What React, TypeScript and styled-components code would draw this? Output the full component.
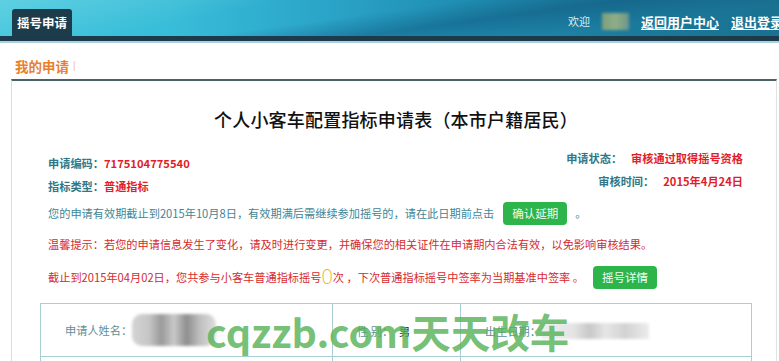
import styled, { createGlobalStyle } from 'styled-components';

const GlobalStyle = createGlobalStyle`
  body {
    margin: 0;
    background: #fff;
    font-family: 'Noto Sans CJK SC', 'Noto Sans', sans-serif;
    overflow: hidden;
  }
`;

export default function App() {
  return (
    <Page>
      <GlobalStyle />
      <Header>
        <Band>
          <Tab>摇号申请</Tab>
          <UserBox>
            <Welcome>欢迎</Welcome>
            <Blurred $w={27} $h={17} $tone="green" />
            <TopLink>返回用户中心</TopLink>
            <TopLink>退出登录</TopLink>
          </UserBox>
        </Band>
        <DarkBar />
        <LightBar />
      </Header>

      <SectionTitle>
        我的申请<Pipe>|</Pipe>
      </SectionTitle>

      <Panel>
        <FormTitle>个人小客车配置指标申请表（本市户籍居民）</FormTitle>

        <InfoRow>
          <InfoLeft>
            <Line>
              <Label>申请编码：</Label>
              <Value>7175104775540</Value>
            </Line>
            <Line>
              <Label>指标类型：</Label>
              <Value>普通指标</Value>
            </Line>
          </InfoLeft>
          <InfoRight>
            <Line>
              <Label>申请状态：</Label>
              <Value $gap>审核通过取得摇号资格</Value>
            </Line>
            <Line>
              <Label>审核时间：</Label>
              <Value $gap>2015年4月24日</Value>
            </Line>
          </InfoRight>
        </InfoRow>

        <Notice $tone="teal" $top={3}>
          您的申请有效期截止到2015年10月8日，有效期满后需继续参加摇号的，请在此日期前点击
          <GreenButton>确认延期</GreenButton>
          <Dot>。</Dot>
        </Notice>

        <Notice $tone="red" $top={9} $h={20}>
          温馨提示：若您的申请信息发生了变化，请及时进行变更，并确保您的相关证件在申请期内合法有效，以免影响审核结果。
        </Notice>

        <Notice $tone="red" $top={11}>
          截止到2015年04月02日，您共参与小客车普通指标摇号<BigCount>0</BigCount>次 ，下次普通指标摇号中签率为当期基准中签率 。
          <GreenButton>摇号详情</GreenButton>
        </Notice>

        <Table>
          <colgroup>
            <col style={{ width: 292 }} />
            <col style={{ width: 128 }} />
            <col />
          </colgroup>
          <tbody>
            <Row>
              <Cell>
                <CellLabel>申请人姓名：</CellLabel>
                <Blurred $w={84} $h={32} $tone="gray" />
              </Cell>
              <Cell>
                <CellLabel>性 别：</CellLabel>
                <CellValue>男</CellValue>
              </Cell>
              <Cell>
                <CellLabel>出生日期：</CellLabel>
                <Blurred $w={108} $h={16} $tone="light" />
              </Cell>
            </Row>
            <Row>
              <Cell />
              <Cell />
              <Cell />
            </Row>
          </tbody>
        </Table>
      </Panel>

      <Watermark>cqzzb.com天天改车</Watermark>
    </Page>
  );
}

const Page = styled.div`
  position: relative;
  width: 779px;
  height: 361px;
  overflow: hidden;
`;

const Header = styled.header`
  display: flex;
  flex-direction: column;
`;

const Band = styled.div`
  height: 36px;
  display: flex;
  align-items: flex-end;
  justify-content: space-between;
  padding-left: 12px;
  background:
    linear-gradient(168deg, rgba(255, 255, 255, 0.18) 0%, transparent 30%),
    linear-gradient(172deg, transparent 45%, rgba(15, 80, 120, 0.45) 60%, transparent 78%),
    linear-gradient(90deg, #3cc5dc 0%, #38bdd8 22%, #2aa4c8 42%, #1f8db1 60%, #1b7b9c 80%, #1a7191 100%);
`;

const Tab = styled.div`
  width: 60px;
  height: 27px;
  display: flex;
  align-items: center;
  justify-content: center;
  background: #1d3c4b;
  border-radius: 3px 3px 0 0;
  color: #fff;
  font-size: 12.5px;
  font-weight: 700;
`;

const UserBox = styled.div`
  align-self: center;
  display: flex;
  align-items: center;
  gap: 12px;
  margin-right: -4px;
  margin-top: 6px;
`;

const Welcome = styled.span`
  color: #d6eef4;
  font-size: 11px;
`;

const TopLink = styled.a`
  color: #fff;
  font-size: 13px;
  font-weight: 700;
  text-decoration: underline;
  text-underline-offset: 2px;
  white-space: nowrap;
  cursor: pointer;
`;

const DarkBar = styled.div`
  height: 5px;
  background: #1c3a49;
`;

const LightBar = styled.div`
  height: 2px;
  background: #a9d2de;
`;

const SectionTitle = styled.div`
  padding: 10px 0 0 15px;
  height: 25px;
  display: flex;
  align-items: center;
  color: #e8802c;
  font-size: 13.5px;
  font-weight: 700;
`;

const Pipe = styled.span`
  margin-left: 4px;
  font-size: 9px;
  font-weight: 400;
  color: #f0a060;
`;

const Panel = styled.section`
  margin: 1px 2px 0 11px;
  border-top: 2px solid #4b6367;
  border-left: 1px solid #dcdcdc;
  border-right: 1px solid #e2e2e2;
  padding: 26px 24px 0 28px;
`;

const FormTitle = styled.h1`
  margin: 0;
  text-align: center;
  font-size: 18px;
  line-height: 24px;
  font-weight: 500;
  color: #111;
  letter-spacing: 0.2px;
`;

const InfoRow = styled.div`
  display: flex;
  justify-content: space-between;
  padding: 0 9px 0 8px;
`;

const InfoLeft = styled.div`
  padding-top: 20px;
  display: flex;
  flex-direction: column;
`;

const InfoRight = styled.div`
  padding-top: 15px;
  display: flex;
  flex-direction: column;
  align-items: flex-end;
`;

const Line = styled.div`
  height: 23.5px;
  display: flex;
  align-items: center;
  font-size: 11.2px;
  font-weight: 700;
`;

const Label = styled.span`
  color: #2f7888;
`;

const Value = styled.span<{ $gap?: boolean }>`
  color: #e11d2a;
  margin-left: ${(p) => (p.$gap ? '9px' : '0')};
`;

const Notice = styled.div<{ $tone: 'teal' | 'red'; $top: number; $h?: number }>`
  margin-top: ${(p) => p.$top}px;
  padding-left: 8px;
  min-height: ${(p) => p.$h ?? 24}px;
  display: flex;
  align-items: center;
  font-size: 11.2px;
  white-space: nowrap;
  color: ${(p) => (p.$tone === 'teal' ? '#3f8595' : '#d52b2d')};
`;

const GreenButton = styled.button`
  height: 23px;
  padding: 0 9px;
  margin-left: 9px;
  border: none;
  border-radius: 4px;
  background: #2db44b;
  color: #f2fff4;
  font-family: inherit;
  font-size: 11.5px;
  cursor: pointer;
`;

const Dot = styled.span`
  margin-left: 8px;
  color: #3f8595;
`;

const BigCount = styled.span`
  font-size: 20px;
  line-height: 20px;
  color: #f1b43a;
  font-family: 'Open Sans', sans-serif;
  font-weight: 300;
`;

const Table = styled.table`
  margin-top: 14px;
  width: 712px;
  border-collapse: collapse;
  table-layout: fixed;
`;

const Row = styled.tr`
  height: 53px;
`;

const Cell = styled.td`
  border: 1px solid #a9cfd6;
  padding: 0 0 0 24px;
  font-size: 11.2px;
  vertical-align: middle;
  white-space: nowrap;
  overflow: hidden;
`;

const CellLabel = styled.span`
  color: #5e8e99;
  vertical-align: middle;
`;

const CellValue = styled.span`
  color: #222;
  margin-left: 6px;
  vertical-align: middle;
`;

const Blurred = styled.span<{ $w: number; $h: number; $tone: 'green' | 'gray' | 'light' }>`
  display: inline-block;
  vertical-align: middle;
  width: ${(p) => p.$w}px;
  height: ${(p) => p.$h}px;
  border-radius: ${(p) => (p.$tone === 'gray' ? '10px' : '1px')};
  filter: blur(1.5px);
  background: ${(p) =>
    p.$tone === 'green'
      ? 'linear-gradient(90deg, #7d9f7e, #8fae86 50%, #6e958c)'
      : p.$tone === 'gray'
        ? 'linear-gradient(90deg, #d4d4d4 0%, #c6c6c6 20%, #9a9a9a 35%, #c9c9c9 50%, #8e8e8e 65%, #bdbdbd 80%, #dedede 100%)'
        : 'linear-gradient(90deg, #eee 0%, #e4e4e4 30%, #c8c8c8 45%, #e6e6e6 60%, #d2d2d2 78%, #ececec 100%)'};
`;

const Watermark = styled.div`
  position: absolute;
  left: 206px;
  top: 309px;
  font-family: 'Noto Sans CJK SC', sans-serif;
  font-size: 39.5px;
  line-height: 44px;
  font-weight: 700;
  color: rgba(88, 178, 88, 0.82);
  white-space: nowrap;
  pointer-events: none;
`;
